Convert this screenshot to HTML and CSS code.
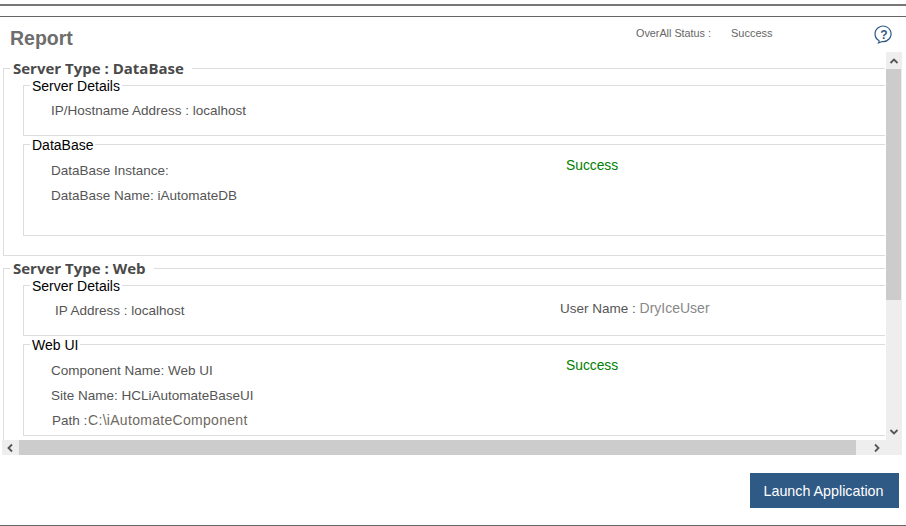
FILE: index.html
```html
<!DOCTYPE html>
<html>
<head>
    <title>Report</title>
    <link rel="stylesheet" href="styles.css">
</head>
<body>
    <div class="page">
        <div class="top-rule"></div>

        <div class="report-head">
            <h1>Report</h1>
            <div class="overall">
                <span class="overall-label">OverAll Status :</span>
                <span>Success</span>
            </div>
            <svg class="help-icon" width="20" height="20" viewBox="0 0 20 20">
                <path d="M5 16.6 A8 7.8 0 1 1 8 17.6 Q6.5 18.6 4.6 18.8 Q5.4 17.8 5 16.6 Z" fill="none" stroke="#2f5a85" stroke-width="1.2"/>
                <text x="10" y="14.5" text-anchor="middle" class="help-mark">?</text>
            </svg>
        </div>

        <div class="panel">
            <div class="panel-view">
                <fieldset class="server">
                    <legend>Server Type : DataBase</legend>
                    <fieldset class="group group-details">
                        <legend>Server Details</legend>
                        <div class="row">IP/Hostname Address : localhost</div>
                    </fieldset>
                    <fieldset class="group group-tall">
                        <legend>DataBase</legend>
                        <div class="cols">
                            <div class="col-left">
                                <div class="row">DataBase Instance:</div>
                                <div class="row">DataBase Name: iAutomateDB</div>
                            </div>
                            <div class="status">Success</div>
                        </div>
                    </fieldset>
                </fieldset>

                <fieldset class="server">
                    <legend>Server Type : Web</legend>
                    <fieldset class="group group-details">
                        <legend>Server Details</legend>
                        <div class="cols">
                            <div class="col-left">
                                <div class="row row-ip">IP Address : localhost</div>
                            </div>
                            <div class="user">User Name : <span class="muted">DryIceUser</span></div>
                        </div>
                    </fieldset>
                    <fieldset class="group group-tall">
                        <legend>Web UI</legend>
                        <div class="cols">
                            <div class="col-left">
                                <div class="row">Component Name: Web UI</div>
                                <div class="row">Site Name: HCLiAutomateBaseUI</div>
                                <div class="row row-path">Path : <span class="path">C:\iAutomateComponent</span></div>
                            </div>
                            <div class="status">Success</div>
                        </div>
                    </fieldset>
                </fieldset>
            </div>

            <div class="vbar">
                <div class="arrow-btn">
                    <svg width="10" height="8" viewBox="0 0 10 8"><path d="M1.5 6 L5 2.5 L8.5 6" class="chev"/></svg>
                </div>
                <div class="vthumb"></div>
                <div class="arrow-btn vdown">
                    <svg width="10" height="8" viewBox="0 0 10 8"><path d="M1.5 2 L5 5.5 L8.5 2" class="chev"/></svg>
                </div>
            </div>

            <div class="hbar">
                <div class="arrow-btn harrow">
                    <svg width="8" height="10" viewBox="0 0 8 10"><path d="M6 1.5 L2.5 5 L6 8.5" class="chev"/></svg>
                </div>
                <div class="hthumb"></div>
                <div class="arrow-btn hright">
                    <svg width="8" height="10" viewBox="0 0 8 10"><path d="M2 1.5 L5.5 5 L2 8.5" class="chev"/></svg>
                </div>
            </div>
            <div class="corner"></div>
        </div>

        <div class="report-foot">
            <button class="launch">Launch Application</button>
        </div>
    </div>
</body>
</html>
```

FILE: styles.css
```css
body {
    margin: 0;
    background-color: #ffffff;
    color: #555555;
    font-family: "Liberation Sans", Arial, sans-serif;
    font-size: 13.5px;
}

.page {
    display: flex;
    flex-direction: column;
    height: 526px;
    box-sizing: border-box;
    overflow: hidden;
    border-bottom: 1px solid #666666;
}

.top-rule {
    height: 10px;
    flex: none;
    margin-top: 4px;
    border-top: 2px solid #777777;
    border-bottom: 1px solid #666666;
}

.report-head {
    display: flex;
    align-items: flex-start;
    height: 35px;
    flex: none;
}

h1 {
    margin: 10px 0 0 10px;
    width: 626px;
    font-size: 19.5px;
    line-height: 23px;
    font-weight: bold;
    color: #6d6d6d;
}

.overall {
    display: flex;
    width: 238px;
    margin-top: 9px;
    font-size: 11px;
    line-height: 14px;
    color: #666666;
}

.overall-label {
    width: 95px;
    font-size: 10.8px;
}

.help-icon {
    margin-top: 7px;
}

.help-mark {
    font-size: 12px;
    font-weight: bold;
    fill: #2f5a85;
}

.panel {
    display: grid;
    grid-template-columns: 884px 16px;
    grid-template-rows: 388px 15px;
    flex: none;
    margin-left: 2px;
    width: 900px;
}

.panel-view {
    overflow: hidden;
    padding: 7px 0 0 1px;
    box-sizing: border-box;
    margin-right: 1px;
}

fieldset {
    margin: 0;
    border: 1px solid #dddddd;
    min-width: 0;
}

.server {
    width: 1000px;
    box-sizing: border-box;
    margin-bottom: 3px;
    padding: 0 0 19px 19px;
}

.server > legend {
    margin-left: -13px;
    padding: 0 8px 0 3px;
    font-family: "Open Sans", Arial, sans-serif;
    font-size: 15px;
    line-height: 18px;
    font-weight: bold;
    color: #4a4a4a;
}

.group {
    padding: 0 0 0 27px;
    box-sizing: border-box;
}

.group > legend {
    margin-left: -21px;
    padding: 2px 2px 0;
    font-size: 14px;
    line-height: 15px;
    color: #000000;
}

.group-details {
    height: 59px;
}

.group-tall {
    height: 100px;
}

.group-tall .cols {
    padding-top: 5px;
}

.group-details .row {
    margin-top: 4px;
}

.cols {
    display: flex;
}

.col-left {
    width: 515px;
}

.row {
    height: 25px;
    line-height: 25px;
}

.row-ip {
    margin-left: 4px;
}

.row-path {
    margin-left: 1px;
}

.path {
    margin-left: -3px;
    font-size: 14px;
    color: #6f6a5f;
    letter-spacing: 0.3px;
}

.status {
    margin-top: -1px;
    font-size: 13.8px;
    line-height: 17px;
    color: #008000;
}

.user {
    margin: 5px 0 0 -6px;
    line-height: 18px;
}

.muted {
    font-size: 14px;
    color: #888888;
}

.vbar {
    display: flex;
    flex-direction: column;
    background-color: #eeeeee;
}

.vthumb {
    width: 15px;
    height: 231px;
    background-color: #cccccc;
}

.vdown {
    margin-top: auto;
}

.hbar {
    display: flex;
    background-color: #eeeeee;
}

.hthumb {
    width: 837px;
    background-color: #cccccc;
}

.arrow-btn {
    display: flex;
    align-items: center;
    justify-content: center;
    height: 17px;
    flex: none;
    background-color: #eeeeee;
}

.harrow {
    box-sizing: border-box;
    width: 17px;
    height: 15px;
    padding-right: 2px;
}

.hright {
    width: 18px;
    height: 15px;
    margin-left: 12px;
}

.corner {
    background-color: #eeeeee;
}

.chev {
    fill: none;
    stroke: #555555;
    stroke-width: 1.8;
}

.report-foot {
    display: flex;
    justify-content: flex-end;
    padding: 18px 7px 0 0;
}

.launch {
    width: 149px;
    height: 35px;
    padding: 0 2px 0 0;
    border: none;
    background-color: #2f5a85;
    color: #ffffff;
    font-family: "Liberation Sans", Arial, sans-serif;
    font-size: 14.3px;
    cursor: pointer;
}
```
